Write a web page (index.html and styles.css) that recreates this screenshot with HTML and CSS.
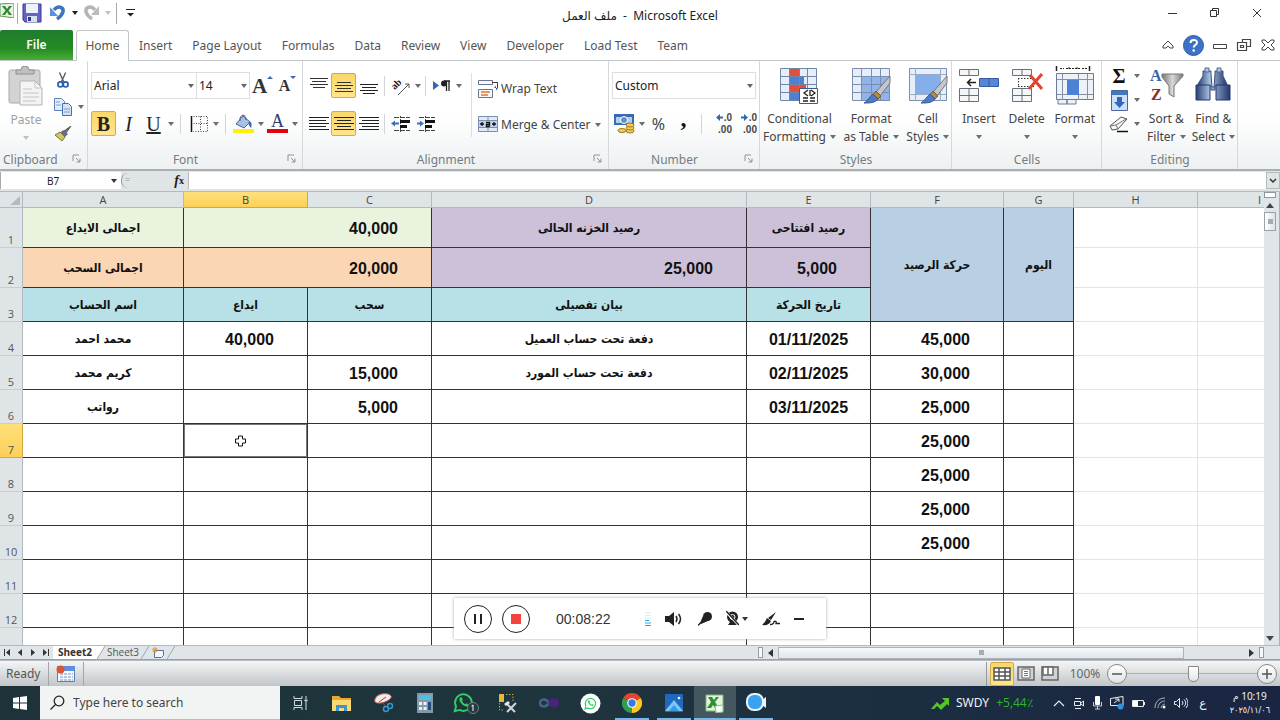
FILE: index.html
```html
<!DOCTYPE html>
<html lang="en">
<head>
<meta charset="utf-8">
<title>ملف العمل - Microsoft Excel</title>
<link rel="stylesheet" href="styles.css">
</head>
<body>
<svg class="defs" aria-hidden="true">
  <defs>
    <linearGradient id="steel" x1="0" y1="0" x2="1" y2="0"><stop offset="0" stop-color="#28406e"/><stop offset=".4" stop-color="#a9c0e4"/><stop offset="1" stop-color="#22386a"/></linearGradient>
    <linearGradient id="grey" x1="0" y1="0" x2="1" y2="0"><stop offset="0" stop-color="#777"/><stop offset=".5" stop-color="#d8d8d8"/><stop offset="1" stop-color="#777"/></linearGradient>
    <symbol id="brush" viewBox="0 0 28 28"><path d="M27 0v7L17 20l-4-4z" fill="#c3c7cb" stroke="#73777b"/><path d="M13 15l5 5-3 3-5-4z" fill="#b08a42" stroke="#6e5a30"/><path d="M10 18l5 5c-3 4-8 4-14 4 4-2 5-6 9-9z" fill="#4d7ac4" stroke="#35579a"/></symbol>
    <symbol id="launcher" viewBox="0 0 9 9"><path d="M1 7V1h6M4 4l4 4M8 4.500v3.500H4.500" fill="none" stroke="#8b9298"/></symbol>
    <symbol id="slash" viewBox="0 0 8 13"><path d="M0 13L8 0H0z" fill="var(--tab, none)"/><path d="M0 13L8 0" stroke="#9fa6ab"/></symbol>
    <symbol id="wa" viewBox="0 0 24 24"><path d="M2 22l1.500-5.500A9.500 9.500 0 1 1 7.500 20.500z" fill="none" stroke="currentColor" stroke-width="2.200"/><path d="M8 6.500c-3 3 4 11 8.500 10 2-.8 1.500-2.200 0-3-1.800-1-1.800 1-3 .2-1.500-.9-2.500-2-3-3.200-.4-1 1-1 .5-2.500C10.200 6 9 5.800 8 6.500z" fill="currentColor"/></symbol>
  </defs>
</svg>
<div class="app">
  <header class="titlebar">
    <div class="quick">
      <svg width="14" height="15" viewBox="0 0 14 15"><path d="M0 1l14-1v15L0 13z" fill="#e6f2e2" stroke="#5d9a54"/><path d="M2 3h3l2 3 2-3h3L8.500 7.500 12 12H9L7 9l-2 3H2l3.500-4.500z" fill="#2c8a2d"/></svg>
      <span class="vsep"></span>
      <button aria-label="Save"><svg width="20" height="20" viewBox="0 0 20 20"><path d="M1 1h18v18H3l-2-2z" fill="#6464c0" stroke="#383b8c"/><path d="M4 1h12v9H4z" fill="#eef2fb"/><path d="M5 13h10v6H5z" fill="#d9dff2"/><path d="M6 14h3v4H6z" fill="#353a80"/></svg></button>
      <button class="undo" aria-label="Undo"><svg width="16" height="18" viewBox="0 0 16 18"><path d="M4 6c4-5 10-3 9 2-1 3-3 5-6 7" fill="none" stroke="#3c74c2" stroke-width="3.500"/><path d="M0 3v9h8z" fill="#5c90d8"/></svg></button>
      <button class="dd black" aria-label="Undo list"></button>
      <button aria-label="Redo"><svg width="16" height="18" viewBox="0 0 16 18"><path d="M12 6C8 1 2 3 3 8c1 3 3 5 6 7" fill="none" stroke="#b5b5b5" stroke-width="3.500"/><path d="M16 2v9H8z" fill="#bcbcbc"/></svg></button>
      <button class="dd pale" aria-label="Redo list"></button>
      <span class="vsep"></span>
      <button class="more" aria-label="Customize toolbar"><svg width="9" height="8" viewBox="0 0 9 8"><path d="M0 .5h9" stroke="#222"/><path d="M1 4h7L4.500 7.500z" fill="#222"/></svg></button>
    </div>
    <h1 class="title"><bdi>ملف العمل</bdi>&nbsp; -&nbsp; Microsoft Excel</h1>
    <div class="winbtns">
      <button aria-label="Minimize"><svg width="10" height="10"><path d="M0 5.500h9" stroke="#333"/></svg></button>
      <button aria-label="Restore"><svg width="10" height="10"><path d="M.5 2.500h6v6h-6zM2.500 2.500v-2h6v6h-2" fill="none" stroke="#333"/></svg></button>
      <button aria-label="Close"><svg width="10" height="10"><path d="M1 1l8 8M9 1L1 9" stroke="#333"/></svg></button>
    </div>
  </header>

  <nav class="tabs">
    <button class="file">File</button>
    <button class="tab active">Home</button>
    <button class="tab">Insert</button>
    <button class="tab">Page Layout</button>
    <button class="tab">Formulas</button>
    <button class="tab">Data</button>
    <button class="tab">Review</button>
    <button class="tab">View</button>
    <button class="tab">Developer</button>
    <button class="tab">Load Test</button>
    <button class="tab">Team</button>
    <div class="docbtns">
      <button aria-label="Collapse ribbon"><svg width="12" height="10"><path d="M1 6l5-5 5 5v2H8L6 6 4 8H1z" fill="none" stroke="#444"/></svg></button>
      <button aria-label="Help"><svg width="21" height="21" viewBox="0 0 21 21"><circle cx="10.500" cy="10.500" r="10" fill="#3c73c6" stroke="#2b5aa3"/><path d="M7.500 8c0-4 6.500-4 6.500-.5 0 2.500-3.300 2.500-3.300 5" fill="none" stroke="#fff" stroke-width="2"/><circle cx="10.700" cy="15.500" r="1.300" fill="#fff"/></svg></button>
      <button aria-label="Minimize workbook"><svg width="14" height="12"><path d="M.5 5.500h13v4H.5z" fill="none" stroke="#444"/></svg></button>
      <button aria-label="Restore workbook"><svg width="16" height="14"><path d="M1.500 4.500h9v8h-9zM4.500 7.500h3v2h-3zM6.500 4.500v-3h8v7h-4" fill="none" stroke="#444" stroke-width="1.200"/></svg></button>
      <button aria-label="Close workbook"><svg width="14" height="12"><path d="M1 1h3l3 3 3-3h3v2l-3 3 3 3v2h-3L7 8l-3 3H1V9l3-3-3-3z" fill="none" stroke="#444"/></svg></button>
    </div>
  </nav>

  <section class="ribbon">
    <div class="group g-clip">
      <div class="gbody">
        <button class="big paste">
          <svg width="36" height="40" viewBox="0 0 36 40"><rect x="1" y="4" width="31" height="33" rx="2" fill="#d3d3d3" stroke="#a9a9a9"/><path d="M8 8V4h5a4 4 0 0 1 8 0h5v4z" fill="#c0c0c0" stroke="#8f8f8f"/><path d="M12 15h15l7 7v17H12z" fill="#f4f4f4" stroke="#b4b4b4"/><path d="M27 15v7h7M15 23h9M15 27h16M15 31h16M15 35h13" fill="none" stroke="#c4c4c4"/></svg>
          <span>Paste</span><i class="tri"></i>
        </button>
        <div class="stack">
          <button aria-label="Cut"><svg width="14" height="18" viewBox="0 0 16 19"><path d="M4 1l5 11M11 1L6 12" stroke="#555" stroke-width="1.500"/><circle cx="5" cy="14.500" r="2.800" fill="none" stroke="#2d5fb0" stroke-width="2"/><circle cx="11" cy="14.500" r="2.800" fill="none" stroke="#2d5fb0" stroke-width="2"/></svg></button>
          <button aria-label="Copy"><svg width="19" height="18" viewBox="0 0 19 18"><path d="M.5.500h7l3 3v9H.5z" fill="#e4eefa" stroke="#5a82b8"/><path d="M8.500 5.500h6l3 3v9h-9z" fill="#d3e3f6" stroke="#4472ae"/><path d="M2 4h4M2 7h5M10 11h6M10 14h6" stroke="#7ba0d0"/></svg></button><i class="tri"></i>
          <button aria-label="Format Painter"><svg width="17" height="16" viewBox="0 0 17 16"><path d="M16 0l-5 7-2-2z" fill="#777" stroke="#555"/><path d="M8 4l5 4-3 3-5-4z" fill="#666a9a"/><path d="M5 6l5 5-3 4L0 9z" fill="#cfc66a" stroke="#7c7633"/></svg></button>
        </div>
      </div>
      <div class="caption">Clipboard<svg width="9" height="9"><use href="#launcher"/></svg></div>
    </div>

    <div class="group g-font">
      <div class="gbody rows">
        <div class="row">
          <span class="sel w106"><select aria-label="Font"><option>Arial</option></select></span><span class="sel w53"><select aria-label="Font size"><option>14</option></select></span>
          <button class="w25 glyph-a" aria-label="Grow font"><span>A</span><i class="up"></i></button>
          <button class="w25 glyph-a small" aria-label="Shrink font"><span>A</span><i class="down"></i></button>
        </div>
        <div class="row">
          <button class="w25 on serif bold" aria-label="Bold">B</button>
          <button class="w25 serif italic" aria-label="Italic">I</button>
          <button class="w25 serif under" aria-label="Underline">U</button><button class="dd" aria-label="Underline styles"></button>
          <span class="sep"></span>
          <button class="w25" aria-label="Borders"><svg width="18" height="18" viewBox="0 0 18 18"><path d="M3.500 1.500h14v15h-14M10.500 1.500v15M3.500 8.500h14" fill="none" stroke="#444" stroke-dasharray="1 1.500"/><path d="M1.500 1v16" stroke="#111" stroke-width="1.500"/></svg></button><button class="dd" aria-label="Border styles"></button>
          <span class="sep"></span>
          <button class="w25" aria-label="Fill color"><svg width="21" height="19" viewBox="0 0 21 19"><path d="M10 2l7 6-6 6-8-4z" fill="#a7c0e6" stroke="#4169a8"/><path d="M7 7c-1-7 6-8 6-1" fill="none" stroke="#555"/><path d="M16 7c3 1 3 4 2 7-2-2-3-4-2-7z" fill="#3c69b4"/><path d="M0 15h21v4H0z" fill="#fff200"/></svg></button><button class="dd" aria-label="Fill colors"></button>
          <button class="w25 fontcolor" aria-label="Font color"><span>A</span></button><button class="dd" aria-label="Font colors"></button>
        </div>
      </div>
      <div class="caption">Font<svg width="9" height="9"><use href="#launcher"/></svg></div>
    </div>

    <div class="group g-align">
      <div class="gbody">
        <div class="rows">
          <div class="row">
            <button class="w25" aria-label="Top align"><svg width="18" height="18"><path d="M0 1.500h18M2 4.500h14M0 7.500h18M3 10.500h12" stroke="#333"/></svg></button>
            <button class="w25 on" aria-label="Middle align"><svg width="18" height="18"><path d="M2 5.500h14M0 8.500h18M2 11.500h14M0 14.500h18" stroke="#333"/></svg></button>
            <button class="w25" aria-label="Bottom align"><svg width="18" height="18"><path d="M0 7.500h18M2 10.500h14M0 13.500h18M3 16.500h12" stroke="#222"/></svg></button>
            <span class="sep"></span>
            <button class="w25" aria-label="Orientation"><svg width="22" height="22" viewBox="0 0 22 22"><g transform="rotate(-45 9 11)"><text x="3" y="11" class="icon-ab">ab</text></g><path d="M8 20L19 9M15 9h4v4" fill="none" stroke="#555"/></svg></button><button class="dd" aria-label="Orientation list"></button>
            <span class="sep"></span>
            <button class="w25" aria-label="Text direction"><svg width="18" height="14" viewBox="0 0 18 14"><path d="M0 2l6 4.500L0 11z" fill="#3165b5"/><path d="M11 2h6M13.500 2v10M16 2v10" stroke="#222" stroke-width="1.300"/><circle cx="11" cy="4.500" r="3" fill="#222"/></svg></button><button class="dd" aria-label="Direction list"></button>
          </div>
          <div class="row">
            <button class="w25" aria-label="Align left"><svg width="20" height="16"><path d="M0 1.500h20M0 4.500h17M0 7.500h20M0 10.500h17M0 13.500h20" stroke="#222"/></svg></button>
            <button class="w25 on" aria-label="Center"><svg width="20" height="16"><path d="M0 1.500h20M3 4.500h14M0 7.500h20M3 10.500h14M0 13.500h20" stroke="#222"/></svg></button>
            <button class="w25" aria-label="Align right"><svg width="20" height="16"><path d="M0 1.500h20M3 4.500h17M0 7.500h20M3 10.500h17M0 13.500h20" stroke="#222"/></svg></button>
            <span class="sep"></span>
            <button class="w25" aria-label="Decrease indent"><svg width="20" height="18" viewBox="0 0 20 18"><path d="M3 2.500h16M3 15.500h16" stroke="#444" stroke-dasharray="5 1"/><path d="M9.500 1v16" stroke="#444" stroke-dasharray="2 1"/><path d="M9 5h10v3H9zM9 10h7v3H9z" fill="#111"/><path d="M0 8.500l4-3v2h4v2H4v2z" fill="#3b70be"/></svg></button>
            <button class="w25" aria-label="Increase indent"><svg width="20" height="18" viewBox="0 0 20 18"><path d="M3 2.500h16M3 15.500h16" stroke="#444" stroke-dasharray="5 1"/><path d="M9.500 1v16" stroke="#444" stroke-dasharray="2 1"/><path d="M9 5h10v3H9zM9 10h7v3H9z" fill="#111"/><path d="M8 8.500l-4-3v2H1v2h3v2z" fill="#3b70be"/></svg></button>
          </div>
        </div>
        <span class="tall"></span>
        <div class="rows wide">
          <button class="lbl"><svg width="21" height="20" viewBox="0 0 21 20"><path d="M.5 1.500h14v4H.5zM.5 10.500h14v8H.5z" fill="#f6f8fb" stroke="#68778c"/><path d="M14 3.500h6M19.500 4v5" stroke="#444"/><path d="M20 9h-4l2-2.500v5z" fill="#2d62b0"/><path d="M3 13h9M3 16h7" stroke="#e17832" stroke-width="1.500"/></svg>Wrap Text</button>
          <button class="lbl"><svg width="21" height="17" viewBox="0 0 21 17"><path d="M.5.500h19v15H.5zM.5 4.500h19M.5 11.500h19M10 .5v4M10 11.500v4" fill="#dfe9f7" stroke="#7b8fac"/><path d="M1 5h18v6H1z" fill="#bed3f1"/><path d="M2 8h4M14 8h4M4 6v4M16 6v4M8 6.500h3.500v4M11.500 8.500H8.500v2h3" stroke="#111" fill="none" stroke-width="1.300"/></svg>Merge &amp; Center<i class="tri"></i></button>
        </div>
      </div>
      <div class="caption">Alignment<svg width="9" height="9"><use href="#launcher"/></svg></div>
    </div>

    <div class="group g-num">
      <div class="gbody rows">
        <div class="row"><span class="sel w144"><select aria-label="Number format"><option>Custom</option></select></span></div>
        <div class="row">
          <button class="w25" aria-label="Accounting format"><svg width="21" height="20" viewBox="0 0 21 20"><path d="M0 0h20v11H0z" fill="#376bb5"/><path d="M2 3h16v6H2z" fill="#b8cde9"/><circle cx="10" cy="6" r="3.500" fill="#5f8dcb" stroke="#fff"/><g fill="#f3ce52" stroke="#9a7726"><ellipse cx="16" cy="17" rx="4" ry="2"/><ellipse cx="16" cy="14" rx="4" ry="2"/><ellipse cx="16" cy="11" rx="4" ry="2"/><ellipse cx="8" cy="16.500" rx="4" ry="2"/></g></svg></button><button class="dd" aria-label="Accounting list"></button>
          <button class="w25 pct" aria-label="Percent style">%</button>
          <button class="w25 comma" aria-label="Comma style">,</button>
          <span class="sep"></span>
          <button class="w25 dec" aria-label="Increase decimal"><span><svg width="7" height="7"><path d="M0 3.500L4 0v2.500h3v2H4V7z" fill="#3466b0"/></svg>.0</span><span>.00</span></button>
          <button class="w25 dec" aria-label="Decrease decimal"><span><svg width="7" height="7"><path d="M7 3.500L3 0v2.500H0v2h3V7z" fill="#3466b0"/></svg>.0</span><span>.00</span></button>
        </div>
      </div>
      <div class="caption">Number<svg width="9" height="9"><use href="#launcher"/></svg></div>
    </div>

    <div class="group g-styles">
      <div class="gbody bigs">
        <button class="big"><svg width="40" height="39" viewBox="0 0 40 39"><path d="M1.500 2.500h36v32h-36z" fill="#e6eefb"/><path d="M11 2h9v8h-9zM11 18h16v8H11z" fill="#e34f3c"/><path d="M11 10h14v8H11zM11 26h9v9h-9z" fill="#4f80d6"/><path d="M1.500 2.500h36v32h-36zM1 10.500h37M1 18.500h37M1 26.500h37M10.500 2v33M20.500 2v33M28.500 2v33" fill="none" stroke="#7286a3"/><path d="M20.500 22.500h18v15h-18z" fill="#fff" stroke="#445b80"/><path d="M29 24l-4 3 4 3M24 32h5M24 35h5M32 24l4 3-4 3M31 32h5M31 35h5M31 24v6" fill="none" stroke="#222" stroke-width="1.300"/></svg><span>Conditional</span><span>Formatting<i class="tri"></i></span></button>
        <button class="big"><svg width="40" height="39" viewBox="0 0 40 39"><path d="M1.500 2.500h37v32h-37z" fill="#e6eefb"/><path d="M11 10h28v25H11z" fill="#8fb3ea"/><path d="M1.500 2.500h37v32h-37zM1 10.500h37M1 18.500h37M1 26.500h37M10.500 2v33M20.500 2v33M29.500 2v33" fill="none" stroke="#7b8fad"/><use href="#brush" x="12" y="10" width="28" height="28"/></svg><span>Format</span><span>as Table<i class="tri"></i></span></button>
        <button class="big"><svg width="40" height="39" viewBox="0 0 40 39"><path d="M1.500 2.500h37v32h-37z" fill="#e6eefb" stroke="#7b8fad"/><path d="M1 8.500h37M1 28.500h37M7.500 2v33M32.500 2v33" stroke="#9aabc4"/><path d="M8 9h24v19H8z" fill="#86aeea"/><use href="#brush" x="12" y="10" width="28" height="28"/></svg><span>Cell</span><span>Styles<i class="tri"></i></span></button>
      </div>
      <div class="caption">Styles</div>
    </div>

    <div class="group g-cells">
      <div class="gbody bigs">
        <button class="big"><svg width="40" height="39" viewBox="0 0 40 39"><g fill="#f5f6f8" stroke="#66707c"><path d="M.5 3.500h19v6H.5zM.5 22.500h19v13H.5zM10 3v7M10 22v14M0 29.500h20"/></g><path d="M20.500 12.500h19v8h-19z" fill="#5587d8" stroke="#3558a0"/><path d="M30 12v9" stroke="#3558a0"/><path d="M17 16.500H9M12 13l-3.500 3.500L12 20" fill="none" stroke="#222" stroke-width="1.500"/></svg><span>Insert</span><i class="tri"></i></button>
        <button class="big"><svg width="40" height="39" viewBox="0 0 40 39"><g fill="#f5f6f8" stroke="#66707c"><path d="M5.500 3.500h19v6h-19zM5.500 22.500h19v13h-19zM15 3v7M15 22v14M5 29.500h20"/></g><path d="M11 12.500h16M11 20.500h16M11.500 12v9" fill="none" stroke="#333" stroke-dasharray="1.500 1.500"/><path d="M23 9l12 14M35 8L22 23" stroke="#e4442f" stroke-width="3"/></svg><span>Delete</span><i class="tri"></i></button>
        <button class="big"><svg width="40" height="39" viewBox="0 0 40 39"><path d="M1.500 7.500h37v26h-37zM3 34v4h9v-4M12 34v4h9v-4" fill="#eef2f8" stroke="#6d7c92"/><path d="M7.500 8v26M32.500 8v26M2 13.500h36M2 28.500h36M23.500 8v26" stroke="#8392a8"/><path d="M12 14h12v15H12z" fill="#4e81d6"/><path d="M1.500 0v5M34.500 0v5" stroke="#222" stroke-width="1.500"/><path d="M5 2.500h4M11 2.500h14M27 2.500h5M14 1v3M22 1v3" stroke="#222" stroke-dasharray="2 1"/></svg><span>Format</span><i class="tri"></i></button>
      </div>
      <div class="caption">Cells</div>
    </div>

    <div class="group g-edit">
      <div class="gbody">
        <div class="stack edit">
          <button class="sigma" aria-label="AutoSum">Σ</button><i class="tri"></i>
          <button aria-label="Fill"><svg width="17" height="21" viewBox="0 0 17 21"><path d="M.5.500h16v20H.5z" fill="#cfe0f6" stroke="#436aa6"/><path d="M1 1h15v4H1z" fill="#4575bd"/><path d="M6 7h5v5h3l-5.500 6L3 12h3z" fill="#2f68bd"/></svg></button><i class="tri"></i>
          <button aria-label="Clear"><svg width="20" height="17" viewBox="0 0 20 17"><path d="M1 10L12 1l6 2-9 10-6 1z" fill="#f7f7f7" stroke="#555"/><path d="M1 10l6-1 2 4M7 9l10-6" fill="none" stroke="#777"/><path d="M8 15.500h11" stroke="#111" stroke-width="1.500"/></svg></button><i class="tri"></i>
        </div>
        <button class="big"><svg width="36" height="39" viewBox="0 0 36 39"><path d="M14 8h21v2l-9 10v11l-5-3V20l-7-9z" fill="url(#grey)" stroke="#777"/><text x="2" y="15" class="icon-az blue">A</text><text x="3" y="34" class="icon-az red">Z</text></svg><span>Sort &amp;</span><span>Filter<i class="tri"></i></span></button>
        <button class="big"><svg width="38" height="39" viewBox="0 0 38 39"><path d="M9 5h8v3l1 13h2l1-13V5h8v5l4 8v2H21v4h-4v-4H4v-2l5-8z" fill="url(#steel)" stroke="#3b5382"/><path d="M2 19h14v15H2zM22 19h14v15H22z" fill="url(#steel)" stroke="#22386a"/><path d="M11 2h4v4h-4zM23 2h4v4h-4z" fill="#b7c6df" stroke="#51688f"/></svg><span>Find &amp;</span><span>Select<i class="tri"></i></span></button>
      </div>
      <div class="caption">Editing</div>
    </div>
  </section>

  <div class="formulabar">
    <div class="namebox"><input aria-label="Name box" value="B7"><i class="tri dark"></i></div>
    <div class="fx"><span class="knob">=</span><button class="fxb" aria-label="Insert function"><i>f</i>x</button></div>
    <input class="formula" aria-label="Formula bar">
    <button class="expand" aria-label="Expand formula bar"><svg width="8" height="6"><path d="M1 1l3 3 3-3" fill="none" stroke="#333" stroke-width="1.500"/></svg></button>
  </div>

  <main class="work">
    <div class="viewport">
      <table class="sheet">
        <colgroup><col class="c-h"><col class="c-a"><col class="c-b"><col class="c-b"><col class="c-d"><col class="c-b"><col class="c-f"><col class="c-g"><col class="c-b"><col></colgroup>
        <thead><tr><th class="corner"><svg width="10" height="9"><path d="M10 0v9H0z" fill="#b4bbc0"/></svg></th><th>A</th><th class="cur">B</th><th>C</th><th>D</th><th>E</th><th>F</th><th>G</th><th>H</th><th>I</th></tr></thead>
        <tbody>
          <tr class="t"><th>1</th><td class="green">اجمالى الايداع</td><td class="green n" colspan="2">40,000</td><td class="purple">رصيد الخزنه الحالى</td><td class="purple">رصيد افتتاحى</td><td class="blue" rowspan="3">حركة الرصيد</td><td class="blue" rowspan="3">اليوم</td><td class="o"></td><td class="o"></td></tr>
          <tr class="t"><th>2</th><td class="orange">اجمالى السحب</td><td class="orange n" colspan="2">20,000</td><td class="purple n">25,000</td><td class="purple n">5,000</td><td class="o"></td><td class="o"></td></tr>
          <tr><th>3</th><td class="teal">اسم الحساب</td><td class="teal">ايداع</td><td class="teal">سحب</td><td class="teal">بيان تفصيلى</td><td class="teal">تاريخ الحركة</td><td class="o"></td><td class="o"></td></tr>
          <tr><th>4</th><td>محمد احمد</td><td class="n">40,000</td><td></td><td>دفعة تحت حساب العميل</td><td class="date">01/11/2025</td><td class="n">45,000</td><td></td><td class="o"></td><td class="o"></td></tr>
          <tr><th>5</th><td>كريم محمد</td><td></td><td class="n">15,000</td><td>دفعة تحت حساب المورد</td><td class="date">02/11/2025</td><td class="n">30,000</td><td></td><td class="o"></td><td class="o"></td></tr>
          <tr><th>6</th><td>رواتب</td><td></td><td class="n">5,000</td><td></td><td class="date">03/11/2025</td><td class="n">25,000</td><td></td><td class="o"></td><td class="o"></td></tr>
          <tr><th class="cur">7</th><td></td><td class="selected"><svg class="pointer" width="11" height="12" viewBox="0 0 11 12"><path d="M3.500 1h4v3h3v4h-3v3h-4V8h-3V4h3z" fill="#fff" stroke="#111"/></svg></td><td></td><td></td><td></td><td class="n">25,000</td><td></td><td class="o"></td><td class="o"></td></tr>
          <tr><th>8</th><td></td><td></td><td></td><td></td><td></td><td class="n">25,000</td><td></td><td class="o"></td><td class="o"></td></tr>
          <tr><th>9</th><td></td><td></td><td></td><td></td><td></td><td class="n">25,000</td><td></td><td class="o"></td><td class="o"></td></tr>
          <tr><th>10</th><td></td><td></td><td></td><td></td><td></td><td class="n">25,000</td><td></td><td class="o"></td><td class="o"></td></tr>
          <tr><th>11</th><td></td><td></td><td></td><td></td><td></td><td></td><td></td><td class="o"></td><td class="o"></td></tr>
          <tr><th>12</th><td></td><td></td><td></td><td></td><td></td><td></td><td></td><td class="o"></td><td class="o"></td></tr>
          <tr><th></th><td></td><td></td><td></td><td></td><td></td><td></td><td></td><td class="o"></td><td class="o"></td></tr>
        </tbody>
      </table>
    </div>
    <div class="vscroll">
      <span class="split"></span>
      <button aria-label="Scroll up"><svg width="8" height="5"><path d="M0 5l4-5 4 5z" fill="#444"/></svg></button>
      <span class="vthumb"><i></i></span>
      <button class="end" aria-label="Scroll down"><svg width="8" height="5"><path d="M0 0l4 5 4-5z" fill="#444"/></svg></button>
    </div>
  </main>

  <div class="sheetbar">
    <div class="navs">
      <button aria-label="First sheet"><svg width="6" height="7"><path d="M.5 0v7" stroke="#333"/><path d="M6 0v7L2 3.500z" fill="#333"/></svg></button>
      <button aria-label="Previous sheet"><svg width="6" height="7"><path d="M5 0v7L1 3.500z" fill="#333"/></svg></button>
      <button aria-label="Next sheet"><svg width="6" height="7"><path d="M1 0v7l4-3.500z" fill="#333"/></svg></button>
      <button aria-label="Last sheet"><svg width="6" height="7"><path d="M5.500 0v7" stroke="#333"/><path d="M0 0v7l4-3.500z" fill="#333"/></svg></button>
    </div>
    <button class="stab cur">Sheet2</button>
    <svg class="edge white" width="8" height="13"><use href="#slash"/></svg>
    <button class="stab">Sheet3</button>
    <svg class="edge" width="8" height="13"><use href="#slash"/></svg>
    <button class="stab new" aria-label="Insert sheet"><svg width="13" height="12" viewBox="0 0 13 12"><path d="M2.500 3.500h9v5l-2 2h-7z" fill="#f3f6fb" stroke="#5670a4"/><path d="M3 0v6M0 3h6M1 1l4 4M5 1L1 5" stroke="#e2942f"/></svg></button>
    <svg class="edge" width="8" height="13"><use href="#slash"/></svg>
    <div class="hscroll">
      <span class="hsplit"></span>
      <button aria-label="Scroll left"><svg width="5" height="8"><path d="M5 0v8L0 4z" fill="#333"/></svg></button>
      <span class="hthumb"><i></i></span>
      <button class="end" aria-label="Scroll right"><svg width="5" height="8"><path d="M0 0v8l5-4z" fill="#333"/></svg></button>
      <span class="hsplit"></span>
    </div>
  </div>

  <div class="status">
    <span class="ready">Ready</span>
    <button class="macro" aria-label="Record macro"><svg width="20" height="18" viewBox="0 0 20 18"><path d="M1.500 1.500h17v15h-17z" fill="#f5f9ff" stroke="#5b7fb8"/><path d="M1 1h18v5H1z" fill="#5d8fdc"/><path d="M4 9h13M4 12h13M4 15h13" stroke="#7a92c0" stroke-dasharray="3 1"/><circle cx="4.500" cy="4.500" r="4" fill="#d8553a"/></svg></button>
    <div class="views">
      <button class="on" aria-label="Normal view"><svg width="18" height="14"><path d="M1 1h16v12H1zM1 5h16M1 9h16M6 1v12M12 1v12" fill="#fff" stroke="#555" stroke-width="1.500"/></svg></button>
      <button aria-label="Page layout view"><svg width="18" height="15"><path d="M1 1h16v13H1z" fill="#cfd3d6" stroke="#666" stroke-width="1.500"/><path d="M5 3h8v9H5z" fill="#fff" stroke="#666"/><path d="M7 5.500h4M7 7.500h4M7 9.500h4" stroke="#777"/></svg></button>
      <button aria-label="Page break view"><svg width="18" height="15"><path d="M1 1h16v13H1z" fill="#cfd3d6" stroke="#666" stroke-width="1.500"/><path d="M2 1h5v8H2zM7 1h5v8H7z" fill="#fff" stroke="#666" stroke-width="1.500"/></svg></button>
    </div>
    <button class="zoomtext">100%</button>
    <div class="zoom">
      <button class="round" aria-label="Zoom out"><svg width="10" height="10"><path d="M0 5h10" stroke="#555" stroke-width="1.500"/></svg></button>
      <input type="range" min="0" max="100" value="51" aria-label="Zoom">
      <button class="round" aria-label="Zoom in"><svg width="10" height="10"><path d="M0 5h10M5 0v10" stroke="#555" stroke-width="1.500"/></svg></button>
    </div>
  </div>

  <footer class="taskbar">
    <button class="start" aria-label="Start"><svg width="14" height="14" viewBox="0 0 14 14"><path d="M0 2l6-1v5.500H0zM7 1l7-1v6.500H7zM0 7.500h6V13l-6-1zM7 7.500h7V14l-7-1z" fill="#fff"/></svg></button>
    <label class="search"><svg width="15" height="15" viewBox="0 0 15 15"><circle cx="9" cy="6" r="4.800" fill="none" stroke="#222" stroke-width="1.300"/><path d="M5.500 9.500L.5 14.500" stroke="#222" stroke-width="1.300"/></svg><input aria-label="Search" placeholder="Type here to search"></label>
    <div class="apps">
      <button aria-label="Task view"><svg width="16" height="14" viewBox="0 0 16 14"><path d="M1 0v2.500h8V0M1 14v-2.500h8V14M1.500 4.500h7v5h-7zM13 0v3M13 6v8" fill="none" stroke="#d5dcdf"/><path d="M11.500 4.500h3" stroke="#d5dcdf" stroke-width="2"/></svg></button>
      <button aria-label="File Explorer"><svg width="20" height="17" viewBox="0 0 20 17"><path d="M0 1h7l2 2h10v13H0z" fill="#e9a92c"/><path d="M0 5h19v11H0z" fill="#fbd972"/><path d="M4 16v-6h11v6h-3v-3H7v3z" fill="#3e93d2"/></svg></button>
      <button aria-label="Snipping tool"><svg width="20" height="20" viewBox="0 0 20 20"><path d="M1 6C3 0 15-1 17 3c2 3-8 8-13 7-2 0-4-1-3-4z" fill="#ececec" stroke="#c6504b"/><path d="M5 9l7-5M9 9l2 5" stroke="#c33"/><circle cx="12" cy="16" r="2.500" fill="none" stroke="#3198cf" stroke-width="1.500"/><circle cx="16" cy="13" r="2.500" fill="none" stroke="#3198cf" stroke-width="1.500"/></svg></button>
      <button aria-label="Calculator"><svg width="16" height="20" viewBox="0 0 16 20"><path d="M0 0h16v20H0z" fill="#8598a5"/><path d="M2 2h12v5H2z" fill="#4fc0e4"/><path d="M2 9h3v3H2zM6.500 9h3v3h-3zM2 14h3v3H2zM6.500 14h3v3h-3z" fill="#edf4f7"/><path d="M11 9h3v8h-3z" fill="#1d4d82"/></svg></button>
      <button class="green-i" aria-label="WhatsApp"><svg width="27" height="23" viewBox="0 0 27 23"><use href="#wa" x="0" y="0" width="21" height="21"/><circle cx="20" cy="16" r="5.500" fill="#263b40" stroke="#6d8085"/><path d="M18.500 14l1.500-1v6" fill="none" stroke="#fff"/></svg></button>
      <button aria-label="Tools"><svg width="20" height="20" viewBox="0 0 20 20"><path d="M1 1h5v8H1z" fill="#e8b73c"/><path d="M8 1.500h7v8M1.500 10v7H6" fill="none" stroke="#c6a24a" stroke-dasharray="1.500 1.500"/><path d="M8 10l9 9M18 10l-9 9" stroke="#d0d6d8" stroke-width="2"/><path d="M6 11l4-3 2 2-4 3z" fill="#e4e8ea"/></svg></button>
      <button aria-label="Visual Studio"><svg width="20" height="12" viewBox="0 0 20 12"><path d="M10 6C7 1 1 2 1 6s6 5 9 0" fill="none" stroke="#40648a" stroke-width="2.500"/><path d="M10 6c3-6 9-5 9 0s-6 5-9 0" fill="#4a2478" stroke="#4a2478" stroke-width="2"/></svg></button>
      <button class="green-i" aria-label="WhatsApp Business"><svg width="21" height="21" viewBox="0 0 21 21"><circle cx="10.500" cy="10.500" r="10" fill="#fff"/><use href="#wa" x="4" y="4" width="13" height="13"/></svg></button>
      <button class="run" aria-label="Chrome"><svg width="20" height="20" viewBox="0 0 20 20"><path d="M10 10L1.300 5A10 10 0 0 1 18.700 5z" fill="#e5442f"/><path d="M10 10l8.700-5A10 10 0 0 1 10 20z" fill="#fbca20"/><path d="M10 10v10A10 10 0 0 1 1.300 5z" fill="#2da04f"/><circle cx="10" cy="10" r="4.800" fill="#fff"/><circle cx="10" cy="10" r="3.700" fill="#3b78e7"/></svg></button>
      <button class="run" aria-label="Photos"><svg width="18" height="18" viewBox="0 0 18 18"><rect width="18" height="18" rx="1" fill="#1f69c1"/><path d="M0 17L9 6l9 11z" fill="#7cc6f6"/><path d="M4 17l5-6 5 6z" fill="#369ae3"/><circle cx="14" cy="4" r="1.300" fill="#fff"/></svg></button>
      <button class="run front" aria-label="Excel"><svg width="19" height="19" viewBox="0 0 19 19"><path d="M1 1h17v16H1z" fill="#e4f1df" stroke="#7fb873"/><path d="M3 3h4l2 3 2-3h3l-4 5 4 6h-4l-2-3-2 3H2l4-6z" fill="#2f8f2e"/><path d="M10 12l8-1v7l-7 1z" fill="#f7faf5" stroke="#8fb58a"/></svg></button>
      <button class="run" aria-label="Zoom"><svg width="21" height="20" viewBox="0 0 21 20"><rect x="1" y="1" width="16" height="16" rx="7" fill="#3aa3ee" stroke="#e9f5fd" stroke-width="2"/><path d="M16 7l4-3v11l-4-3z" fill="#e9f5fd"/></svg></button>
    </div>
    <div class="tray">
      <button class="stock"><svg width="19" height="13" viewBox="0 0 19 13"><path d="M1 12l6-7 3 3 5-4-3-3h7v8l-2-2-6 6-4-4-3 3z" fill="#55c720"/></svg><span>SWDY</span><b>+5,44٪</b></button>
      <button aria-label="Hidden icons"><svg width="12" height="8"><path d="M1 7l5-5 5 5" fill="none" stroke="#e8ebee" stroke-width="1.200"/></svg></button>
      <button aria-label="Meet now"><svg width="12" height="13" viewBox="0 0 12 13"><path d="M2 1.500h6M2 11.500h6M1.500 4.500h6v4h-6zM8 6l2.500-2v5L8 7" fill="none" stroke="#e8ebee"/></svg></button>
      <button aria-label="Microphone"><svg width="9" height="14" viewBox="0 0 9 14"><rect x="2" width="5" height="9" rx="1" fill="#fff"/><path d="M.5 6v4h8V6M4.500 10v3M2 13h5" fill="none" stroke="#ccd"/></svg></button>
      <button aria-label="Update"><svg width="14" height="14" viewBox="0 0 14 14"><path d="M.5 2.500L13 .5v9H.5zM4 7l5-4M5 3h4v3" fill="none" stroke="#e8ebee"/><circle cx="10.500" cy="10.500" r="3" fill="#3b8ddd"/></svg></button>
      <button aria-label="Battery"><svg width="14" height="9"><path d="M.5 1.500h11v6H.5zM12.500 3v3" fill="none" stroke="#e8ebee"/><path d="M1 2h5v5H1z" fill="#fff"/></svg></button>
      <button aria-label="Network"><svg width="12" height="12"><path d="M1 11C1 5 5 1 11 1M4 11c0-4 3-7 7-7M7 11c0-2 2-4 4-4" fill="none" stroke="#aab4bf"/><circle cx="10" cy="10" r="1.500" fill="#fff"/></svg></button>
      <button aria-label="Volume"><svg width="14" height="12"><path d="M.5 4.500h2l3-3v9l-3-3h-2zM8 4q2 2 0 4M10 2.500q3.500 3.500 0 7M12 1q4 5 0 10" fill="none" stroke="#e8ebee"/></svg></button>
      <button class="lang">ع</button>
      <button class="clock"><bdi>10:19 م</bdi><bdi class="day" dir="ltr">٢٠٢٥/١١/٠٦</bdi></button>
    </div>
  </footer>

  <aside class="recorder">
    <button class="circle" aria-label="Pause"><svg width="10" height="10"><path d="M2 0v10M8 0v10" stroke="#222" stroke-width="2"/></svg></button>
    <button class="circle" aria-label="Stop"><svg width="10" height="10"><path d="M0 0h10v10H0z" fill="#f4433c"/></svg></button>
    <time>00:08:22</time>
    <div class="tools">
      <svg width="6" height="14"><path d="M0 1h6M0 3.500h6M0 6h6" stroke="#d5edf5"/><path d="M0 8.500h4M0 11h6M0 13.500h6" stroke="#32a8d8"/></svg>
      <button aria-label="Speaker"><svg width="19" height="14" viewBox="0 0 19 14"><path d="M0 4h4l5-4v14l-5-4H0z" fill="#222"/><path d="M11 4q2 3 0 6M13.500 2q4 5 0 10" fill="none" stroke="#222" stroke-width="1.500"/></svg></button>
      <button aria-label="Microphone"><svg width="14" height="14" viewBox="0 0 14 14"><circle cx="9.500" cy="4.500" r="4.500" fill="#222"/><path d="M5 4l5 5-7 3-1-1z" fill="#222"/><path d="M0 13.500l3-3" stroke="#222" stroke-width="1.300"/></svg></button>
      <button class="cam" aria-label="Webcam off"><svg width="13" height="15" viewBox="0 0 13 15"><circle cx="6.500" cy="6" r="5.500" fill="#222"/><path d="M2 14h9l-2-3H4z" fill="#222"/><circle cx="6.500" cy="6" r="2.500" fill="none" stroke="#fff"/><path d="M0 1l13 13" stroke="#fff" stroke-width="2.500"/><path d="M0 0l13 14" stroke="#222" stroke-width="1.500"/></svg><i class="tri dark"></i></button>
      <button aria-label="Draw"><svg width="18" height="14" viewBox="0 0 18 14"><path d="M14 0L9 8 6 6zM5 6l4 3q-2 5-9 4 3-2 5-7z" fill="#222"/><path d="M8 12.500q4 0 4-3 3-1 2 2h4" fill="none" stroke="#222" stroke-width="1.300"/></svg></button>
      <button aria-label="Collapse recorder"><svg width="10" height="4"><path d="M0 2h10" stroke="#222" stroke-width="2"/></svg></button>
    </div>
  </aside>
</div>
</body>
</html>
```
FILE: styles.css
```css
* { box-sizing: border-box; }
html, body { height: 100%; }
body { margin: 0; overflow: hidden; font: 12px/18px "Noto Sans", "Open Sans", "DejaVu Sans", sans-serif; color: #3c3c3c; background: #fff; }
button, input, select { font: inherit; color: inherit; border: 0; padding: 0; margin: 0; background: none; border-radius: 0; outline: 0; }
button { display: flex; align-items: center; justify-content: center; flex: none; white-space: nowrap; }
svg { display: block; flex: none; }
.defs { position: absolute; width: 0; height: 0; }
.app { position: relative; height: 100vh; display: flex; flex-direction: column; }

.titlebar { height: 30px; flex: none; display: grid; grid-template-columns: 1fr auto 1fr; align-items: center; }
.quick { display: flex; align-items: center; gap: 4px; height: 26px; align-self: start; }
.quick > svg { margin-bottom: 6px; margin-right: -1px; }
.undo { margin-left: 4px; }
.more { margin-left: 5px; }
.vsep { width: 1px; height: 21px; background: #aaa; }
.title { margin: 2px 0 0; font: 12px/18px "Noto Sans", "DejaVu Sans", sans-serif; color: #222; }
.winbtns { display: flex; justify-content: flex-end; align-self: start; height: 26px; padding-right: 2px; }
.winbtns button { width: 42px; }

.tri { display: inline-block; flex: none; width: 0; height: 0; border: 3px solid transparent; border-top: 4px solid #6d6d6d; border-bottom: 0; }
.tri.dark { border-top-color: #333; }
.dd { width: 9px; height: 24px; }
.dd::after { content: ""; border: 3px solid transparent; border-top: 4px solid #6d6d6d; border-bottom: 0; }
.dd.black::after { border-top-color: #222; }
.dd.pale::after, .paste .tri { border-top-color: #c0c0c0; }

.tabs { height: 31px; flex: none; display: flex; align-items: stretch; border-bottom: 1px solid #c3c6c9; color: #555; }
.file { width: 73px; margin-right: 3px; color: #fff; font-weight: 600; border-radius: 2px 2px 0 0; background: linear-gradient(#1f7d2e, #238a22 60%, #49ad37); }
.tab { padding: 2px 10px 0; }
.tab.active { width: 53px; padding: 0; margin-bottom: -1px; border: 1px solid #c3c6c9; border-bottom: 0; border-radius: 3px 3px 0 0; background: #fff; }
.docbtns { margin-left: auto; display: flex; align-items: center; gap: 9px; padding-right: 5px; }

.ribbon { height: 110px; flex: none; display: flex; background: linear-gradient(#fff 50%, #edf1f2); border-bottom: 2px solid #a9afb3; color: #444; }
.group { display: flex; flex-direction: column; flex: none; border-right: 1px solid #d5d9dc; padding: 3px 2px 0 3px; }
.g-clip { width: 88px; } .g-font { width: 215px; } .g-align { width: 306px; } .g-num { width: 151px; } .g-styles { width: 192px; } .g-cells { width: 150px; } .g-edit { width: 136px; }
.gbody { flex: 1; display: flex; align-items: flex-start; }
.caption { height: 18px; position: relative; text-align: center; color: #757b80; }
.caption svg { position: absolute; right: 4px; top: 3px; }
.g-font .caption, .g-align .caption, .g-num .caption { padding-right: 20px; }
.g-clip .caption { text-align: left; }
.rows { display: flex; flex-direction: column; gap: 11px; padding-top: 8px; }
.row { display: flex; align-items: center; height: 27px; }
.sel { position: relative; height: 27px; border: 1px solid #dcdfe1; background: #fff; }
.sel + .sel { border-left: 0; }
.sel select { width: 100%; height: 100%; appearance: none; padding-left: 2px; color: #222; }
.sel::after { content: ""; position: absolute; right: 2px; top: 11px; border: 3px solid transparent; border-top: 4px solid #666; border-bottom: 0; pointer-events: none; }
.w25 { width: 25px; height: 25px; } .w53 { width: 53px; } .w106 { width: 106px; } .w144 { width: 144px; }
.on { background: linear-gradient(#fbd768, #ffe58c); border: 1px solid #d2ab50; border-radius: 2px; }
.sep { width: 1px; height: 20px; margin: 0 5px; background: #d2d5d8; }
.serif { font: 20px/24px "Liberation Serif", serif; color: #222; }
.bold { font-weight: bold; } .italic { font-style: italic; } .under { text-decoration: underline; }
.glyph-a { font: bold 21px/24px "Liberation Serif", serif; color: #333; align-items: center; }
.glyph-a.small { font-size: 16px; }
.glyph-a i { align-self: flex-start; border: 3px solid transparent; margin-top: 3px; }
.glyph-a .up { border-bottom: 3px solid #4267ac; border-top: 0; }
.glyph-a .down { border-top: 3px solid #4267ac; border-bottom: 0; }
.fontcolor span { width: 21px; height: 19px; border-bottom: 4px solid #e3000f; font: 18px/14px "Liberation Serif", serif; color: #2b3f6c; }
.g-align .gbody { gap: 6px; }
.g-align .sep { margin: 0 3px; }
.tall { width: 1px; height: 64px; margin: 9px 0 0 2px; background: #dcdfe1; }
.lbl { height: 27px; gap: 2px; justify-content: flex-start; }
.lbl .tri { margin-left: 2px; }
.wide { padding-top: 11px; gap: 9px; }
.icon-ab { font: bold 10px "Liberation Serif", serif; fill: #222; }
.pct { font-size: 16px; }
.comma { font: bold 24px/10px "Liberation Serif", serif; color: #111; padding-bottom: 12px; }
.dec { flex-direction: column; align-items: flex-end; font: bold 10px/12px "Liberation Sans", sans-serif; }
.dec span { display: flex; align-items: center; gap: 1px; }
.big { flex-direction: column; justify-content: flex-start; line-height: 18px; }
.big svg { margin: 2px 0 5px; }
.big span { display: flex; align-items: center; gap: 4px; }
.big > .tri { margin-top: 7px; }
.paste { width: 46px; color: #a0a0a0; }
.stack { display: grid; grid-template-columns: 28px 8px; grid-auto-rows: 27px; align-items: center; justify-items: center; padding-top: 2px; }
.stack button { grid-column: 1; }
.bigs { justify-content: space-around; }
.g-styles .bigs { justify-content: space-between; }
.g-edit .gbody { justify-content: space-between; }
.stack.edit { grid-auto-rows: 24px; padding-top: 0; }
.sigma { font: bold 20px/24px "Liberation Serif", serif; color: #111; }
.icon-az { font: bold 16px "Liberation Serif", serif; }
.blue { fill: #3762ae; } .red { fill: #8b2e2a; }

.formulabar { height: 21px; flex: none; display: flex; padding: 1px 0 2px; background: #dfe4e7; color: #222; border-bottom: 1px solid #b3b9bd; }
.namebox { width: 121px; display: flex; align-items: center; background: #fff; border-left: 1px solid #aaa; }
.namebox input { width: 104px; text-align: center; font-size: 10px; margin-right: 6px; }
.fx { width: 68px; display: flex; align-items: center; justify-content: space-between; padding-right: 4px; border-right: 1px solid #b5babd; }
.knob { width: 14px; height: 15px; line-height: 13px; border-left: 1px solid #999; border-radius: 8px; padding-left: 3px; font-size: 9px; color: #999; }
.fxb { font: bold 10px/16px "Liberation Serif", serif; } .fxb i { font-size: 14px; }
.formula { flex: 1; background: #fff; }
.expand { width: 14px; border: 1px solid #b5babd; }

.work { flex: 1; min-height: 0; display: flex; background: #dfe5e8; }
.viewport { flex: 1; min-width: 0; overflow: hidden; background: #fff; }
.sheet { width: max(100%, 1322px); table-layout: fixed; border-collapse: separate; border-spacing: 0; }
.c-h { width: 23px; } .c-a { width: 161px; } .c-b { width: 124px; } .c-d { width: 315px; } .c-f { width: 133px; } .c-g { width: 70px; }
.sheet th { padding: 0; font: 11px/14px "Open Sans", sans-serif; color: #555; background: #dfe5e7; border-right: 1px solid #b3babf; border-bottom: 1px solid #b3babf; }
.sheet thead th { height: 16px; color: #444; }
.sheet tbody th { vertical-align: bottom; border-bottom-color: #c7cdd1; }
.sheet th.cur { background: linear-gradient(#fee07a, #fdd057); border-color: #d6a645; }
.corner svg { margin: 2px 0 0 10px; }
.sheet td { height: 34px; padding: 0 4px; text-align: center; font: bold 12px/16px "DejaVu Sans Condensed", "DejaVu Sans", sans-serif; color: #111; border-right: 1px solid #333; border-bottom: 1px solid #333; white-space: nowrap; }
.sheet .t td { height: 40px; }
.sheet td.n, .sheet td.date { font: bold 16px/20px "Liberation Sans", sans-serif; padding-top: 2px; }
.sheet td.n { text-align: right; padding-right: 33px; }
.sheet td.o { border-color: #e1e5e8; }
td.green { background: #e9f3de; } td.orange { background: #fbd6b4; } td.purple { background: #ccc1d9; } td.teal { background: #b8e0e7; } td.blue { background: #b8cfe4; }
.sheet td.selected { box-shadow: inset 0 0 0 1px #777, 0 -1px #333, -1px 0 #333; }
.pointer { margin: 0 auto; position: relative; right: 5px; }

.vscroll { width: 16px; display: flex; flex-direction: column; align-items: center; padding-right: 3px; gap: 2px; border-right: 1px solid #aab0b4; }
.vscroll .split { width: 12px; height: 6px; border: 1px solid #8f979c; background: #fff; }
.vscroll button { height: 10px; }
.vthumb { width: 12px; height: 19px; display: grid; place-items: center; border: 1px solid #9aa2a8; background: linear-gradient(90deg, #fff, #dde2e6); }
.vthumb i, .hthumb i { width: 5px; height: 5px; background: #a6adb2; }
.vscroll .end { margin-top: auto; margin-bottom: 2px; }

.sheetbar { height: 15px; flex: none; display: flex; background: #dfe5e8; border-top: 1px solid #b3b9bd; border-bottom: 1px solid #9ba2a7; font: 10px/13px "Open Sans", sans-serif; }
.navs { width: 53px; display: flex; align-items: center; justify-content: space-around; }
.stab { width: 44px; height: 13px; color: #555; }
.stab.cur { background: #fff; font-weight: 700; color: #333; }
.edge.white { --tab: #fff; }
.stab:not(.cur) { width: 36px; }
.stab.new { width: 18px; }
.hscroll { width: 506px; margin-left: auto; margin-right: 16px; display: flex; align-items: center; gap: 5px; }
.hsplit { width: 5px; height: 11px; border: 1px solid #959ca1; background: #f7f8f9; }
.hthumb { width: 406px; height: 12px; display: grid; place-items: center; border: 1px solid #adb4b9; background: linear-gradient(#f6f8f9, #e1e6ea); }
.hscroll .end { margin-left: auto; }

.status { height: 26px; flex: none; display: flex; align-items: center; background: linear-gradient(#f3f5f6, #c2c6c9); border-top: 1px solid #b5bbbf; }
.ready { padding-left: 6px; width: 49px; color: #555; border-right: 1px solid #a0a6aa; line-height: 24px; }
.macro { width: 35px; height: 24px; border-right: 1px solid #a0a6aa; }
.views { display: flex; margin-left: auto; border-left: 1px solid #999; padding-left: 3px; }
.views button { width: 24px; height: 24px; }
.zoomtext { width: 44px; color: #666; margin-left: 1px; }
.zoom { display: flex; align-items: center; padding-right: 3px; }
.round { width: 20px; height: 20px; border: 1px solid #888; border-radius: 50%; background: linear-gradient(#fff, #dfe2e4); }
.zoom input { width: 130px; height: 20px; appearance: none; background: linear-gradient(#aab0b4, #aab0b4) center / 100% 1px no-repeat; }
.zoom input::-webkit-slider-thumb { appearance: none; width: 11px; height: 16px; border: 1px solid #888; border-radius: 1px 1px 5px 5px; background: linear-gradient(#fff, #e2e5e7); }

.taskbar { height: 34px; flex: none; display: flex; align-items: stretch; background: linear-gradient(90deg, #1d3339, #1f353d 40%, #1b2e41 70%, #1a2542); color: #f1f3f5; }
.start { width: 40px; }
.search { width: 240px; display: flex; align-items: center; gap: 8px; padding-left: 10px; background: #f2f3f3; border-bottom: 1px solid #bbb; }
.search input { flex: 1; min-width: 0; color: #444; }
.search input::placeholder { color: #444; opacity: 1; }
.apps { width: 497px; display: flex; }
.apps button { flex: 1; }
.green-i { color: #2fcf63; }
.run { background: linear-gradient(#75b8ee, #75b8ee) bottom / 34px 2px no-repeat; }
.run.front { background: linear-gradient(#75b8ee, #75b8ee) bottom / 100% 2px no-repeat, #44575f; }
.tray { margin-left: auto; display: flex; align-items: center; gap: 8px; padding-right: 10px; }
.stock { gap: 7px; margin-right: 12px; } .stock b { font: 12px/18px "Open Sans", sans-serif; color: #2db52e; }
.lang { width: 14px; }
.clock { flex-direction: column; margin-left: 12px; font: 10px/14px "Noto Sans", "DejaVu Sans Condensed", sans-serif; }
.day { font: 9px/14px "DejaVu Sans Condensed", "DejaVu Sans", sans-serif; }

.recorder { position: absolute; left: 50%; bottom: 81px; width: 372px; height: 41px; margin-left: -186px; padding-left: 10px; display: flex; align-items: center; gap: 10px; background: #fff; box-shadow: 0 0 3px #aaa; color: #333; }
.circle { width: 28px; height: 28px; border: 1px solid #222; border-radius: 50%; }
.recorder time { font: 14px/20px "Liberation Sans", sans-serif; margin: 0 24px 0 16px; }
.tools { display: flex; align-items: center; gap: 14px; }
.cam { gap: 3px; }
```
